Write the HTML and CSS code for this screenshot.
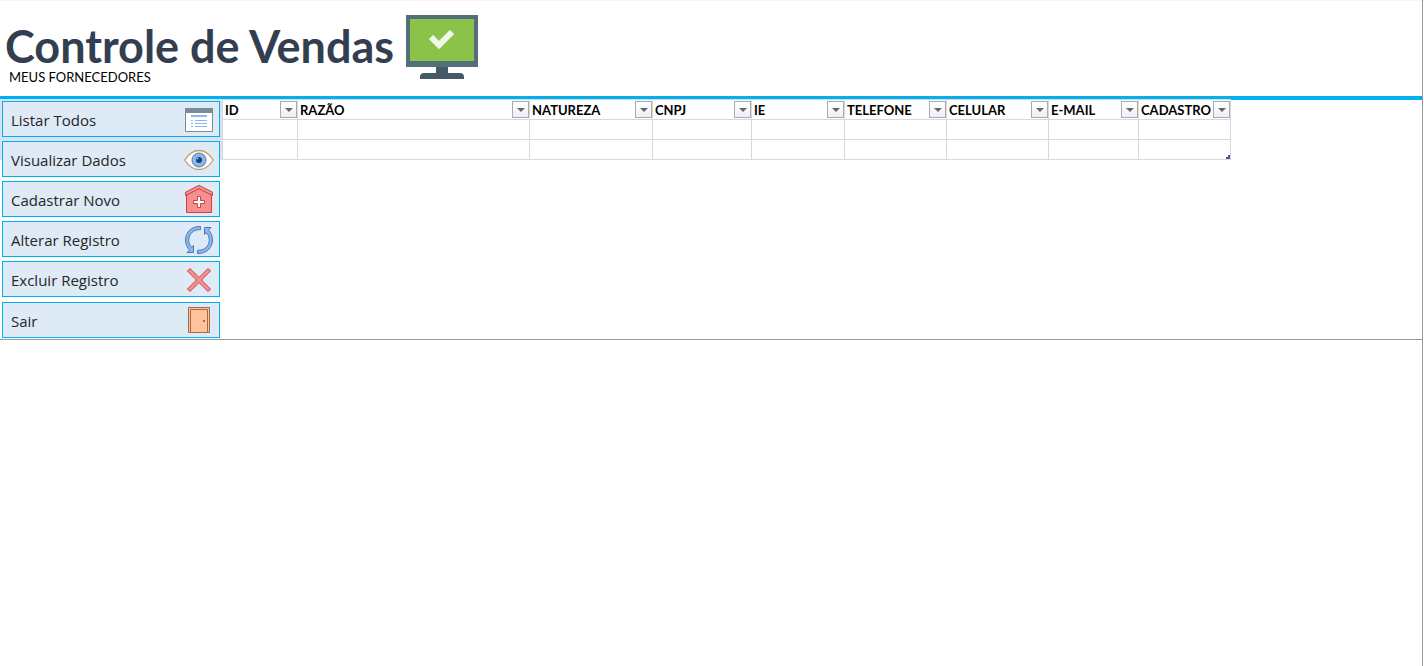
FILE: index.html
```
<!DOCTYPE html>
<html lang="pt-BR">
<head>
  <meta charset="UTF-8">
  <title>Controle de Vendas</title>
  <link rel="stylesheet" href="styles.css">
</head>
<body>
  <div class="page">
    <header class="header">
      <div class="brand">
        <h1>Controle de Vendas</h1>
        <p>MEUS FORNECEDORES</p>
      </div>
      <svg class="monitor" width="72" height="64" viewBox="0 0 72 64">
        <path fill="#455a64" d="M30 52h12v6h12q4 0 4 4v2H14v-2q0-4 4-4h12z"/>
        <path fill="#546e7a" d="M0 0h72v52H0z"/>
        <path fill="#8bc34a" d="M4 4h64v42H4z"/>
        <path fill="none" stroke="#f1f8e9" stroke-width="6" d="M25 22l8 8 13-13"/>
      </svg>
    </header>

    <main class="content">
      <nav class="menu">
        <button type="button">Listar Todos
          <svg width="30" height="30" viewBox="0 0 30 30">
            <path fill="#fff" stroke="#788b9c" d="M1.500 3.500h27v23h-27z"/>
            <path fill="#788b9c" d="M1 3h28v5H1z"/>
            <path fill="#8bb7f0" d="M7 10h16v2H7zM7 15h2v1H7zM11 15h12v1H11zM7 18h2v1H7zM11 18h12v1H11zM7 21h2v1H7zM11 21h12v1H11z"/>
          </svg>
        </button>
        <button type="button">Visualizar Dados
          <svg width="30" height="30" viewBox="0 0 30 30">
            <path fill="#fff" stroke="#c2a05c" stroke-width="1.300" d="M.7 15Q7 5.500 15 5.500T29.300 15Q23 24.500 15 24.500T.7 15z"/>
            <circle cx="15" cy="15" r="7" fill="#8bb7f0" stroke="#4e7ab5"/>
            <circle cx="15" cy="15" r="3" fill="#263f5c"/>
            <circle cx="13.500" cy="13.500" r="1" fill="#8bb7f0"/>
          </svg>
        </button>
        <button type="button">Cadastrar Novo
          <svg width="30" height="30" viewBox="0 0 30 30">
            <path fill="#f78f8f" stroke="#c74343" d="M2.500 27.500V10L15 3l12.500 7v17.500z"/>
            <path fill="#f78f8f" stroke="#c74343" d="M1.500 10.500V7.200L15 .3l13.500 6.900v3.300L15 3.700z"/>
            <path fill="#fff" stroke="#c74343" d="M13.500 11.500h3v4h4v3h-4v4h-3v-4h-4v-3h4z"/>
          </svg>
        </button>
        <button type="button">Alterar Registro
          <svg width="30" height="30" viewBox="0 0 30 30">
            <g id="arrow" fill="#8bb7f0" stroke="#4e7ab5">
              <path d="M16.500 1.500C8 1 1.500 7 1.500 15c0 4 1.500 7.500 4 10l-2.500 2.500h6.500V20.500L7.700 22.300C5.800 20.300 4.700 18 4.700 15c0-6 4.800-10.700 11.800-10.300z"/>
            </g>
            <use href="#arrow" transform="rotate(180 15 15)"/>
          </svg>
        </button>
        <button type="button">Excluir Registro
          <svg width="30" height="30" viewBox="0 0 30 30">
            <path fill="#f78f8f" stroke="#c74343" d="M6 3.500l9 9 9-9L26.500 6l-9 9 9 9-2.500 2.500-9-9-9 9L3.500 24l9-9-9-9z"/>
          </svg>
        </button>
        <button type="button">Sair
          <svg width="30" height="30" viewBox="0 0 30 30">
            <path fill="#ffc49c" stroke="#a16a4a" d="M4.500 1.500h21v25h-21z"/>
            <path fill="#ffc49c" stroke="#a16a4a" d="M6.500 3.500h17v23h-17z"/>
            <path fill="#a16a4a" d="M19 14h2v2h-2z"/>
          </svg>
        </button>
      </nav>

      <table class="grid">
        <colgroup>
          <col class="c-id"><col class="c-razao"><col class="c-natureza"><col class="c-cnpj"><col class="c-ie"><col class="c-fone"><col class="c-fone"><col class="c-email"><col class="c-cadastro">
        </colgroup>
        <thead>
          <tr>
            <th><div class="head">ID<button type="button" aria-label="Filtrar ID"></button></div></th>
            <th><div class="head">RAZÃO<button type="button" aria-label="Filtrar razão"></button></div></th>
            <th><div class="head">NATUREZA<button type="button" aria-label="Filtrar natureza"></button></div></th>
            <th><div class="head">CNPJ<button type="button" aria-label="Filtrar CNPJ"></button></div></th>
            <th><div class="head">IE<button type="button" aria-label="Filtrar IE"></button></div></th>
            <th><div class="head">TELEFONE<button type="button" aria-label="Filtrar telefone"></button></div></th>
            <th><div class="head">CELULAR<button type="button" aria-label="Filtrar celular"></button></div></th>
            <th><div class="head">E-MAIL<button type="button" aria-label="Filtrar e-mail"></button></div></th>
            <th><div class="head">CADASTRO<button type="button" aria-label="Filtrar cadastro"></button></div></th>
          </tr>
        </thead>
        <tbody>
          <tr><td></td><td></td><td></td><td></td><td></td><td></td><td></td><td></td><td></td></tr>
          <tr><td></td><td></td><td></td><td></td><td></td><td></td><td></td><td></td><td class="last"></td></tr>
        </tbody>
      </table>
    </main>
  </div>
</body>
</html>
```
FILE: styles.css
```
* {
  box-sizing: border-box;
}
body {
  margin: 0;
  background: #fff;
  color: #000;
  font-family: Lato, "Liberation Sans", sans-serif;
}
.page {
  min-height: 100vh;
  margin-right: 1px;
  border-right: 1px solid #999;
}

/* header */
.header {
  display: flex;
  align-items: flex-start;
  gap: 12px;
  height: 100px;
  padding: 14px 5px 0;
  border-top: 1px solid #f4f4f4;
  border-bottom: 4px solid #00b0f0;
}
.brand {
  padding-top: 9px;
}
.brand h1 {
  margin: 0;
  color: #333f50;
  font-size: 45px;
  font-weight: bold;
  line-height: 45px;
}
.brand p {
  margin: 0;
  padding-left: 4px;
  font-size: 13px;
  line-height: 16px;
}

/* side menu */
.content {
  display: flex;
  align-items: flex-start;
  margin-top: -1px;
  border-bottom: 1px solid #999;
}
.menu {
  display: flex;
  flex-direction: column;
  gap: 4px;
  width: 222px;
  padding: 2px 2px 1px;
  background: linear-gradient(#d9e1f2, #d9e1f2) no-repeat 0 0 / 100% 61px;
}
.menu button {
  display: flex;
  align-items: center;
  justify-content: space-between;
  width: 218px;
  height: 36px;
  padding: 2px 5px 0 8px;
  border: 1px solid #00b0f0;
  background: #deeaf6;
  color: #262626;
  font-family: "Open Sans", "Noto Sans", sans-serif;
  font-size: 15px;
  cursor: pointer;
}
.menu button:last-child {
  margin-top: 1px;
}

/* suppliers table */
.grid {
  position: relative;
  table-layout: fixed;
  width: 1009px;
  border-collapse: separate;
  border-spacing: 0;
  border: solid #d9d9d9;
  border-width: 1px 0 0 1px;
  background: #fff;
}
.c-id { width: 75px; }
.c-razao { width: 232px; }
.c-natureza { width: 123px; }
.c-cnpj { width: 99px; }
.c-ie { width: 93px; }
.c-fone { width: 102px; }
.c-email { width: 90px; }
.c-cadastro { width: 92px; }
.grid th,
.grid td {
  height: 20px;
  padding: 0;
  border: solid #d9d9d9;
  border-width: 0 1px 1px 0;
}
.head {
  display: flex;
  align-items: center;
  justify-content: space-between;
  height: 19px;
  padding-left: 2px;
  font-size: 13px;
  font-weight: bold;
}
.head button {
  display: flex;
  align-items: center;
  justify-content: center;
  flex: none;
  width: 17px;
  height: 17px;
  padding: 0;
  border: 1px solid #a5acb5;
  background: linear-gradient(#fff, #edf0f4);
  cursor: pointer;
}
.head button::before {
  content: "";
  border: solid transparent;
  border-width: 4px 4px 0;
  border-top-color: #666;
}
.grid .last {
  background:
    linear-gradient(#4457a5, #4457a5) no-repeat 100% 100% / 2px 4px,
    linear-gradient(#4457a5, #4457a5) no-repeat 100% 100% / 4px 2px;
}
```
